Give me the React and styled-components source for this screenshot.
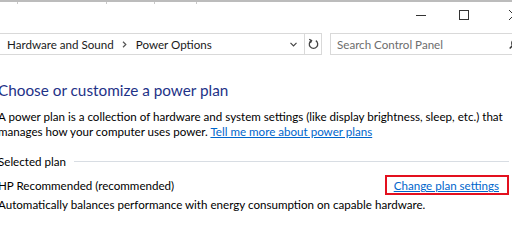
import React from 'react'
import styled, { createGlobalStyle } from 'styled-components'

const GlobalStyle = createGlobalStyle`
  html, body { margin: 0; padding: 0; background: #fff; overflow: hidden; }
  body {
    font-family: Lato, "Noto Sans", sans-serif;
    font-size: 11.6px;
    color: #000;
  }
`

const App = () => {
  return (
    <Window>
      <GlobalStyle />
      <TopStrip>
        <Tick $w={21} />
        <Tick $w={89} />
        <Tick $w={48} />
        <Tick $w={42} />
      </TopStrip>

      <TitleBar>
        <CaptionButton $w={43}>
          <svg width="10" height="10" viewBox="0 0 10 10">
            <path d="M0 5.5h10" stroke="#333" strokeWidth="1" />
          </svg>
        </CaptionButton>
        <CaptionButton $w={43}>
          <svg width="10" height="10" viewBox="0 0 10 10">
            <rect x="0.5" y="0.5" width="9" height="9" fill="none" stroke="#333" strokeWidth="1" />
          </svg>
        </CaptionButton>
        <CaptionButton $w={57}>
          <svg width="10" height="10" viewBox="0 0 10 10">
            <path d="M0 0L10 10M10 0L0 10" stroke="#333" strokeWidth="1" />
          </svg>
        </CaptionButton>
      </TitleBar>

      <AddressRow>
        <AddressBox>
          <Crumbs>
            <span>Hardware and Sound</span>
            <Sep>
              <svg width="5" height="7" viewBox="0 0 5 7">
                <path d="M1 0.8L3.8 3.5L1 6.2" fill="none" stroke="#555" strokeWidth="1.2" />
              </svg>
            </Sep>
            <span>Power Options</span>
          </Crumbs>
          <DropButton>
            <svg width="7" height="5" viewBox="0 0 7 5">
              <path d="M0.5 0.8L3.5 3.8L6.5 0.8" fill="none" stroke="#444" strokeWidth="1.2" />
            </svg>
          </DropButton>
          <RefreshButton>
            <svg width="11" height="12" viewBox="0 0 11 12">
              <path d="M3.2 2.6A4.2 4.2 0 1 0 7.8 2.6" fill="none" stroke="#444" strokeWidth="1.3" />
              <path d="M1.2 1.2L3.6 2.6L2.4 5" fill="none" stroke="#444" strokeWidth="1.3" />
            </svg>
          </RefreshButton>
        </AddressBox>
        <SearchBox>
          <Placeholder>Search Control Panel</Placeholder>
          <svg width="10" height="11" viewBox="0 0 10 11">
            <circle cx="6" cy="4" r="3.3" fill="none" stroke="#333" strokeWidth="1.2" />
            <path d="M3.7 6.4L0.7 9.6" stroke="#333" strokeWidth="1.4" />
          </svg>
        </SearchBox>
      </AddressRow>

      <Content>
        <Heading>Choose or customize a power plan</Heading>
        <Intro>
          A power plan is a collection of hardware and system settings (like display brightness, sleep, etc.) that
          <br />
          manages how your computer uses power. <Link>Tell me more about power plans</Link>
        </Intro>

        <GroupTitle>
          <span>Selected plan</span>
          <Rule />
        </GroupTitle>

        <PlanRow>
          <span>HP Recommended (recommended)</span>
          <Highlight>
            <Link>Change plan settings</Link>
          </Highlight>
        </PlanRow>
        <PlanDesc>Automatically balances performance with energy consumption on capable hardware.</PlanDesc>
      </Content>
    </Window>
  )
}

export default App

// 창 전체
const Window = styled.div`
  width: 545px;
  height: 231px;
  margin-left: -3px;
`

// 맨 위 잘린 줄
const TopStrip = styled.div`
  display: flex;
  height: 2px;
  border-top: 2px solid #bcbcbc;
`

const Tick = styled.div`
  width: ${(p) => p.$w}px;
  border-right: 1px solid #c9c9c9;
  box-sizing: border-box;
`

const TitleBar = styled.div`
  display: flex;
  justify-content: flex-end;
  height: 21px;
`

const CaptionButton = styled.div`
  width: ${(p) => p.$w}px;
  display: flex;
  align-items: center;
  justify-content: center;
`

// 주소줄
const AddressRow = styled.div`
  display: flex;
  gap: 8px;
  margin-top: 8px;
  padding-right: 14px;
`

const AddressBox = styled.div`
  width: 325px;
  height: 22px;
  box-sizing: border-box;
  border: 1px solid #d9d9d9;
  border-left: none;
  display: flex;
  align-items: center;
`

const Crumbs = styled.div`
  flex: 1;
  display: flex;
  align-items: center;
  padding-left: 10px;
  color: #1a1a1a;
`

const Sep = styled.span`
  display: flex;
  margin: 0 9px 0 8px;
`

const DropButton = styled.div`
  width: 22px;
  height: 100%;
  display: flex;
  align-items: center;
  justify-content: center;
  border-right: 1px solid #d9d9d9;
`

const RefreshButton = styled.div`
  width: 16px;
  height: 100%;
  display: flex;
  align-items: center;
  justify-content: center;
`

const SearchBox = styled.div`
  flex: 1;
  height: 22px;
  box-sizing: border-box;
  border: 1px solid #d9d9d9;
  display: flex;
  align-items: center;
  justify-content: space-between;
  padding: 0 8px 0 6px;
`

const Placeholder = styled.span`
  color: #6d6d6d;
`

// 본문
const Content = styled.div`
  padding: 24px 33px 0 1px;
`

const Heading = styled.div`
  font-size: 15.3px;
  color: #1e3287;
  line-height: 22px;
`

const Intro = styled.div`
  margin-top: 8px;
  line-height: 15px;
  white-space: nowrap;
`

const Link = styled.span`
  color: #0066cc;
  text-decoration: underline;
`

const GroupTitle = styled.div`
  margin-top: 16px;
  display: flex;
  align-items: center;
  gap: 8px;
`

const Rule = styled.div`
  flex: 1;
  height: 1px;
  background: #d8dde3;
`

const PlanRow = styled.div`
  margin-top: 7px;
  display: flex;
  justify-content: space-between;
  align-items: center;
`

const Highlight = styled.div`
  border: 2px solid #e3101e;
  padding: 2px 8px 1px 7px;
`

const PlanDesc = styled.div`
  margin-top: 3px;
`
